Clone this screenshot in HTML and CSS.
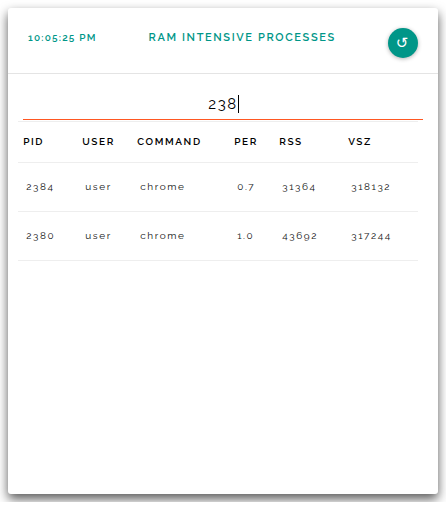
FILE: index.html
```html
<!DOCTYPE html>
<html lang="en">
<head>
<meta charset="utf-8">
<title>RAM Intensive Processes</title>
<link rel="stylesheet" href="styles.css">
</head>
<body>
<main class="card">
  <header class="header">
    <time class="clock">10:05:25 PM</time>
    <h1 class="title">RAM INTENSIVE PROCESSES</h1>
    <button class="refresh" aria-label="Refresh">↺</button>
  </header>
  <div class="search"><span class="query">238</span><span class="caret"></span></div>
  <section class="table">
    <div class="row head"><span>PID</span><span>USER</span><span>COMMAND</span><span>PER</span><span>RSS</span><span>VSZ</span></div>
    <div class="row"><span>2384</span><span>user</span><span>chrome</span><span>0.7</span><span>31364</span><span>318132</span></div>
    <div class="row"><span>2380</span><span>user</span><span>chrome</span><span>1.0</span><span>43692</span><span>317244</span></div>
  </section>
</main>
</body>
</html>
```
FILE: styles.css
```css
* { box-sizing: border-box; }
body {
  margin: 0;
  padding: 8px;
  background: #fff;
  font-family: "Raleway", "Lato", sans-serif;
  font-variant-numeric: oldstyle-nums;
  color: #111;
}
.card {
  width: 430px;
  height: 486px;
  border-radius: 3px;
  background: #fff;
  box-shadow: 0 5px 11px rgba(0, 0, 0, .65);
}
.header {
  display: flex;
  height: 66px;
  padding: 20px 20px 0;
  border-bottom: 1px solid #e4e4e4;
  color: #009688;
}
.clock {
  width: 120px;
  font-size: 10px;
  line-height: 20px;
  font-weight: 600;
  letter-spacing: 1.2px;
}
.title {
  width: 240px;
  margin: 0;
  padding-left: 0.5px;
  font-size: 11px;
  line-height: 19px;
  font-weight: 600;
  letter-spacing: 1.62px;
}
.refresh {
  width: 30px;
  height: 30px;
  padding: 0 2px 0 0;
  border: 0;
  border-radius: 50%;
  background: #009688;
  color: #fff;
  font: 15px/30px "DejaVu Sans", sans-serif;
  box-shadow: 0 1px 4px rgba(0, 0, 0, .3);
}
.search {
  display: flex;
  justify-content: center;
  align-items: center;
  width: 400px;
  height: 31px;
  margin: 15px 0 1px 15px;
  border-bottom: 1px solid #ff5722;
  font-size: 15px;
  letter-spacing: 1.6px;
  color: #000;
}
.query {
  margin-left: 1px;
}
.caret {
  width: 1px;
  height: 18px;
  background: #000;
}
.table {
  width: 400px;
  margin-left: 10px;
  border-top: 1px solid #eee;
}
.row {
  display: grid;
  grid-template-columns: 59px 55px 97px 45px 69px 1fr;
  align-items: center;
  height: 49px;
  padding: 0 0 2px 8.2px;
  border-bottom: 1px solid #eee;
  font-size: 10px;
  letter-spacing: 1.6px;
  color: #111;
}
.head {
  height: 41px;
  padding-left: 5.2px;
  font-weight: 600;
  letter-spacing: 1.6px;
  color: #000;
}
```
